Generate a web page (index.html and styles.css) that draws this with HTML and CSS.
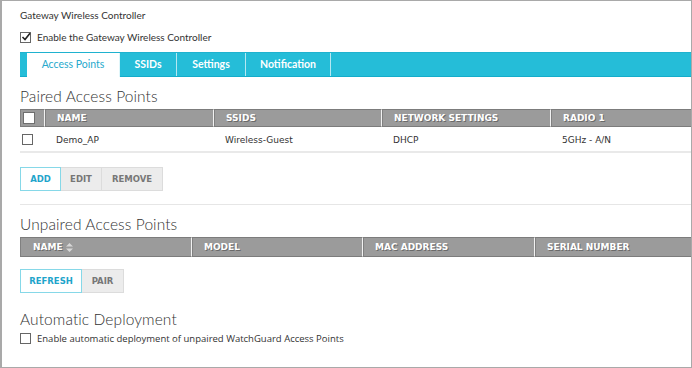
FILE: index.html
```html
<!DOCTYPE html>
<html>
<head>
<meta charset="utf-8">
<link rel="stylesheet" href="styles.css">
</head>
<body>
<div class="frame">
  <div class="title">Gateway Wireless Controller</div>
  <label class="check-row top-check">
    <span class="cb checked"><svg width="10" height="10" viewBox="0 0 10 10"><path d="M1.5 5 L4 7.5 L9 1.2" fill="none" stroke="#222" stroke-width="1.6"/></svg></span>
    <span>Enable the Gateway Wireless Controller</span>
  </label>

  <div class="tabs">
    <div class="tab active">Access Points</div>
    <div class="tab w-ssid">SSIDs</div>
    <div class="tab w-set">Settings</div>
    <div class="tab w-not">Notification</div>
  </div>

  <h2 class="heading h-paired">Paired Access Points</h2>
  <div class="grid paired">
    <div class="th th-cb"><span class="cb white"></span></div>
    <div class="th">NAME</div>
    <div class="th">SSIDS</div>
    <div class="th">NETWORK SETTINGS</div>
    <div class="th">RADIO 1</div>
    <div class="td td-cb"><span class="cb"></span></div>
    <div class="td">Demo_AP</div>
    <div class="td">Wireless-Guest</div>
    <div class="td">DHCP</div>
    <div class="td">5GHz - A/N</div>
  </div>

  <div class="btns b-paired">
    <div class="btn primary w-add">ADD</div>
    <div class="btn w-edit">EDIT</div>
    <div class="btn w-remove">REMOVE</div>
  </div>
  <div class="rule"></div>

  <h2 class="heading h-unpaired">Unpaired Access Points</h2>
  <div class="grid unpaired">
    <div class="th first">NAME <svg class="sort" width="7" height="9" viewBox="0 0 7 9"><path d="M3.5 0 L7 3.6 L0 3.6 Z M0 5.4 L7 5.4 L3.5 9 Z" fill="#d8d8d8"/></svg></div>
    <div class="th">MODEL</div>
    <div class="th">MAC ADDRESS</div>
    <div class="th">SERIAL NUMBER</div>
  </div>

  <div class="btns b-unpaired">
    <div class="btn primary w-refresh">REFRESH</div>
    <div class="btn w-pair">PAIR</div>
  </div>

  <h2 class="heading h-auto">Automatic Deployment</h2>
  <label class="check-row bottom-check">
    <span class="cb"></span>
    <span class="plain">Enable automatic deployment of unpaired WatchGuard Access Points</span>
  </label>
</div>
</body>
</html>
```
FILE: styles.css
```css
html, body {
  margin: 0;
  padding: 0;
  background: #fff;
}
.frame {
  box-sizing: border-box;
  width: 692px;
  height: 368px;
  border: 1px solid #a9a9a9;
  border-left: 2px solid #a9a9a9;
  padding: 0 0 0 18px;
  font-family: "Lato", "Open Sans", sans-serif;
  color: #333;
  overflow: hidden;
}
.title {
  font-size: 10px;
  line-height: 14px;
  margin-top: 7px;
  color: #333;
}
.check-row {
  display: flex;
  align-items: center;
  gap: 6px;
  font-size: 10px;
  color: #333;
}
.top-check {
  margin-top: 8px;
  height: 14px;
}
.cb {
  box-sizing: border-box;
  width: 11px;
  height: 11px;
  border: 1px solid #666;
  background: #fff;
  display: inline-block;
  position: relative;
  flex: none;
}
.cb svg {
  position: absolute;
  left: 0;
  top: -1px;
}
.cb.white {
  border-color: #777;
}
.tabs {
  margin-top: 8px;
  height: 23px;
  background: #25bdd8;
  border-top: 1px solid #1fb2cf;
  border-bottom: 1px solid #14acca;
  display: flex;
  padding-left: 7px;
}
.tab {
  box-sizing: border-box;
  height: 23px;
  line-height: 23px;
  text-align: center;
  color: #fff;
  font-size: 10.5px;
  font-weight: 700;
  border-right: 1px solid #b5e8f2;
}
.tab.active {
  width: 93px;
  background: #fff;
  color: #27a9cc;
  font-weight: 400;
  height: 24px;
  border-right: 1px solid #dff6fa;
}
.w-ssid { width: 57px; }
.w-set { width: 69px; }
.w-not { width: 85px; }
.heading {
  margin: 0;
  font-size: 15.5px;
  font-weight: 300;
  color: #333;
  line-height: 18px;
  letter-spacing: 0.1px;
}
.h-paired { margin-top: 10px; }
.grid {
  display: grid;
  font-family: "DejaVu Sans", Verdana, sans-serif;
}
.paired {
  margin-top: 4px;
  grid-template-columns: 24px 169px 168px 169px 1fr;
  grid-template-rows: 18px 26px;
}
.unpaired {
  margin-top: 4px;
  grid-template-columns: 171px 171px 172px 1fr;
  grid-template-rows: 20px;
}
.th {
  box-sizing: border-box;
  background: #9b9b9b;
  border-top: 1px solid #7c7c7c;
  border-bottom: 1px solid #7c7c7c;
  border-left: 1px solid #f2f2f2;
  color: #fff;
  font-size: 9px;
  font-weight: 700;
  text-shadow: 1px 1px 0 #6a6a6a;
  display: flex;
  align-items: center;
  padding-left: 12px;
  box-shadow: inset 1px 0 0 #808080;
}
.th:first-child, .th.first {
  border-left: 1px solid #808080;
  box-shadow: none;
}
.th.first { padding-left: 12px; }
.th-cb {
  padding-left: 2px;
}
.th-cb .cb {
  width: 12px;
  height: 12px;
  border-color: #6f6f6f;
}
.sort { margin-left: 3px; }
.td {
  font-size: 9px;
  color: #333;
  display: flex;
  align-items: center;
  padding-left: 12px;
  border-bottom: 2px solid #e9e9e9;
  padding-top: 1px;
}
.td-cb { padding-left: 2px; }
.btns {
  display: flex;
  height: 24px;
}
.b-paired { margin-top: 14px; }
.b-unpaired { margin-top: 12px; }
.btn {
  box-sizing: border-box;
  height: 24px;
  background: #ececec;
  border: 1px solid #dcdcdc;
  border-left: none;
  color: #777;
  font-family: "DejaVu Sans", Verdana, sans-serif;
  font-size: 8.5px;
  font-weight: 700;
  display: flex;
  align-items: center;
  justify-content: center;
}
.btn.primary {
  background: #fff;
  border: 1px solid #86d8e8;
  color: #1fa5cb;
}
.w-add { width: 41px; }
.w-edit { width: 41px; }
.w-remove { width: 61px; }
.w-refresh { width: 62px; }
.w-pair { width: 42px; }
.rule {
  margin-top: 13px;
  height: 1px;
  background: #e6e6e6;
}
.h-unpaired { margin-top: 10px; }
.h-auto { margin-top: 17px; }
.bottom-check {
  margin-top: 3px;
  height: 14px;
}
.plain {
  font-family: "Open Sans", sans-serif;
  font-size: 9.5px;
}
```
